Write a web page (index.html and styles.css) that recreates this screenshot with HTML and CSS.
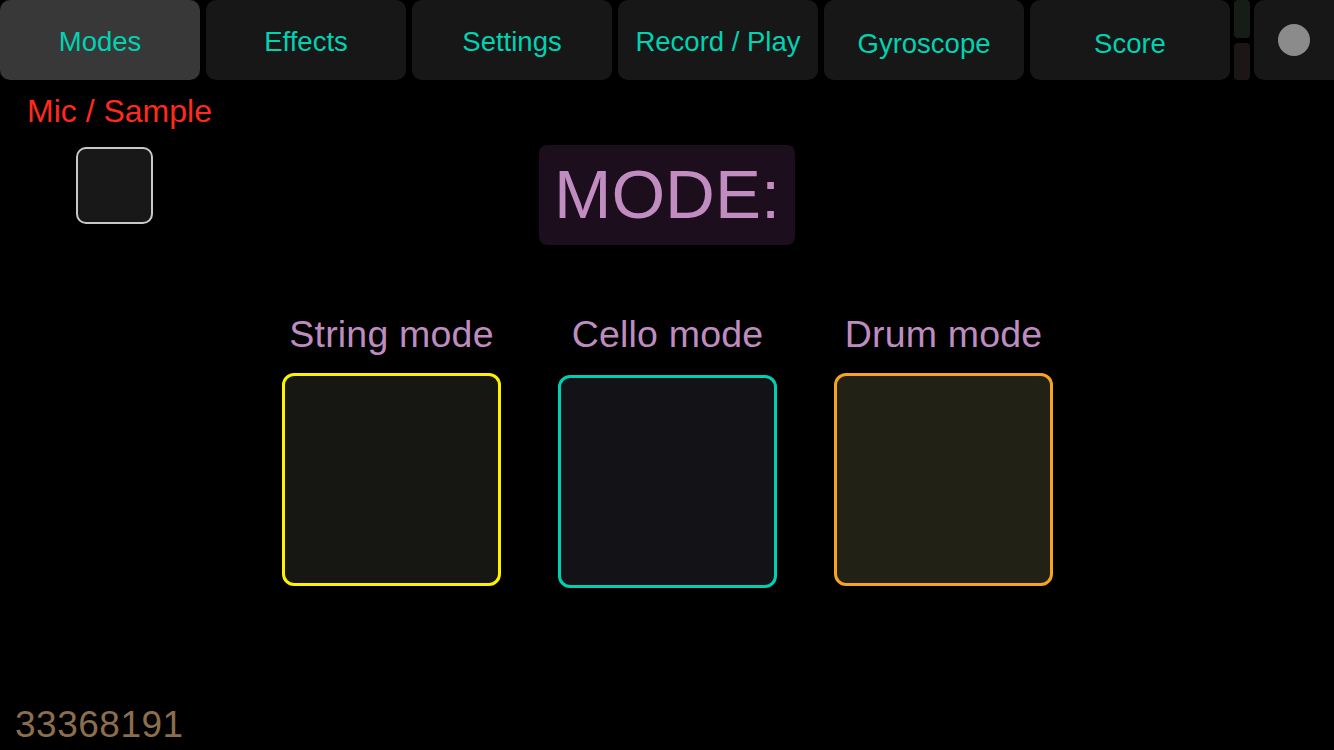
FILE: index.html
```html
<!DOCTYPE html>
<html lang="en">
<head>
<meta charset="utf-8">
<title>Modes</title>
<link rel="stylesheet" href="styles.css">
</head>
<body>
<div class="app">
  <nav class="topbar">
    <div class="tab tab-active">Modes</div>
    <div class="tab">Effects</div>
    <div class="tab">Settings</div>
    <div class="tab">Record / Play</div>
    <div class="tab tab-low">Gyroscope</div>
    <div class="tab tab-low">Score</div>
    <div class="meters">
      <div class="meter meter-green"></div>
      <div class="meter meter-red"></div>
    </div>
    <div class="rec-btn"><span class="rec-dot"></span></div>
  </nav>

  <section class="header-row">
    <div class="mic-col">
      <div class="mic-label">Mic / Sample</div>
      <div class="checkbox"></div>
    </div>
    <div class="mode-title">MODE:</div>
    <div class="spacer"></div>
  </section>

  <section class="modes">
    <div class="mode">
      <div class="mode-label">String mode</div>
      <div class="mode-box mode-string"></div>
    </div>
    <div class="mode">
      <div class="mode-label">Cello mode</div>
      <div class="mode-box mode-cello"></div>
    </div>
    <div class="mode">
      <div class="mode-label">Drum mode</div>
      <div class="mode-box mode-drum"></div>
    </div>
  </section>

  <footer class="footer">33368191</footer>
</div>
</body>
</html>
```

FILE: styles.css
```css
* { box-sizing: border-box; }

html, body {
  margin: 0;
  padding: 0;
  background: #000;
}

body {
  font-family: "Liberation Sans", Arial, Helvetica, sans-serif;
  width: 1334px;
  height: 750px;
  overflow: hidden;
}

.app {
  display: flex;
  flex-direction: column;
  height: 750px;
}

/* top navigation */
.topbar {
  display: flex;
  height: 80px;
  gap: 6px;
}

.tab {
  width: 200px;
  height: 80px;
  background: #171717;
  border-radius: 10px;
  color: #00d2b2;
  font-size: 27.5px;
  line-height: 1;
  display: flex;
  align-items: center;
  justify-content: center;
  padding-top: 3px;
}

.tab-active {
  background: #383838;
}

.tab-low {
  padding-top: 7px;
}

.meters {
  display: flex;
  flex-direction: column;
  gap: 5px;
  width: 16px;
  margin-left: -2px;
}

.meter {
  flex: 1;
  border-radius: 4px;
}

.meter-green { background: #161d17; }
.meter-red { background: #1d1616; }

.rec-btn {
  width: 80px;
  height: 80px;
  margin-left: -2px;
  background: #171717;
  border-radius: 10px 0 0 10px;
  display: flex;
  align-items: center;
  justify-content: center;
}

.rec-dot {
  width: 32px;
  height: 32px;
  border-radius: 50%;
  background: #8b8b8b;
}

/* header row */
.header-row {
  display: grid;
  grid-template-columns: 1fr auto 1fr;
  align-items: start;
}

.mic-col {
  display: flex;
  flex-direction: column;
  align-items: flex-start;
}

.mic-label {
  color: #ff2a1c;
  font-size: 32px;
  margin-top: 13px;
  padding-left: 27px;
}

.checkbox {
  width: 77px;
  height: 77px;
  margin-top: 17px;
  margin-left: 76px;
  background: #181818;
  border: 2px solid #c8c8c8;
  border-radius: 10px;
}

.mode-title {
  margin-top: 65px;
  width: 256px;
  height: 100px;
  background: #1c0e1d;
  border-radius: 8px;
  color: #c18dc1;
  font-size: 69px;
  line-height: 1;
  display: flex;
  align-items: center;
  justify-content: center;
  padding-bottom: 2px;
}

/* modes */
.modes {
  display: flex;
  justify-content: center;
  gap: 57px;
  margin-top: 68px;
  padding-left: 1px;
}

.mode {
  width: 219px;
  display: flex;
  flex-direction: column;
  align-items: center;
}

.mode-label {
  color: #bf8cc0;
  font-size: 37.5px;
  letter-spacing: 0.2px;
  white-space: nowrap;
}

.mode-box {
  width: 219px;
  height: 213px;
  margin-top: 17px;
  border: 3px solid;
  border-radius: 12px;
}

.mode-string {
  background: #161712;
  border-color: #fff200;
}

.mode-cello {
  background: #121217;
  border-color: #00cfb1;
  margin-top: 19px;
}

.mode-drum {
  background: #212115;
  border-color: #f5a51f;
}

/* footer */
.footer {
  margin-top: auto;
  padding: 0 0 4px 15px;
  color: #8c6e4e;
  font-size: 37px;
  letter-spacing: 0.5px;
  line-height: normal;
}
```
